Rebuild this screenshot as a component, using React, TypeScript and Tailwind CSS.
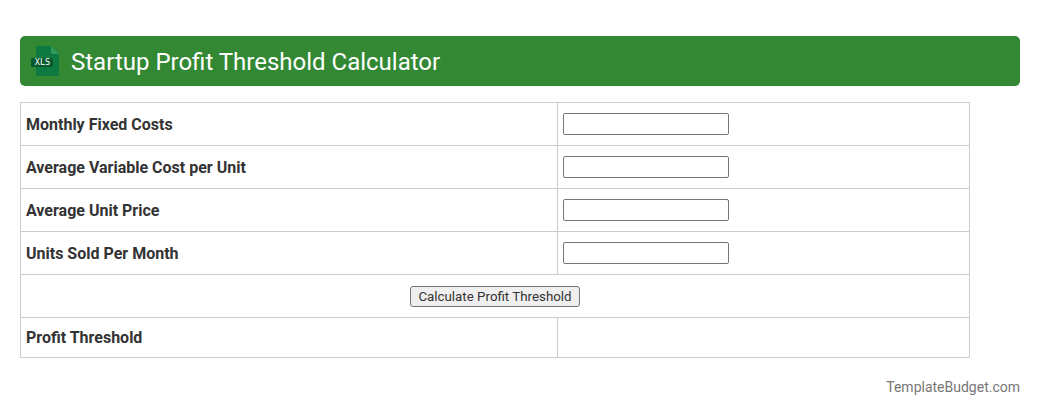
const filas = [
  "Monthly Fixed Costs",
  "Average Variable Cost per Unit",
  "Average Unit Price",
  "Units Sold Per Month",
];

function IconoXls() {
  return (
    <svg width="28" height="30" viewBox="0 0 28 30" className="shrink-0">
      <path d="M5 1a1 1 0 0 1 1-1h14l8 8v21a1 1 0 0 1-1 1H6a1 1 0 0 1-1-1z" fill="#0e7a42" />
      <path d="M20 0l8 8h-7a1 1 0 0 1-1-1z" fill="#2f9a62" />
      <rect x="0" y="12" width="22" height="9" fill="#0a5a30" />
      <text x="11.500" y="19" textAnchor="middle" fill="#ffffff" fontSize="8.500" fontFamily="'DejaVu Sans Mono', monospace">XLS</text>
    </svg>
  );
}

export default function App() {
  return (
    <div className="w-[1040px] h-[415px] bg-white font-['Roboto',sans-serif] text-[#333333] pt-9 px-5 overflow-hidden">
      {/* Cabecera */}
      <div className="h-[50px] bg-[#338833] rounded-[5px] flex items-center pl-[11px]">
        <IconoXls />
        <h1 className="ml-3 pt-0.5 text-2xl font-normal text-white">Startup Profit Threshold Calculator</h1>
      </div>

      <table className="mt-4 w-[950px] border-collapse table-fixed">
        <tbody>
          {filas.map((f) => (
            <tr key={f} className="h-[43px]">
              <td className="w-[537px] border border-[#cccccc] px-[5px] pt-0.5 text-base font-bold">{f}</td>
              <td className="border border-[#cccccc] px-[5px]">
                <input type="text" className="block w-[166px] h-[22px] bg-white border border-[#767676] rounded-[2px]" />
              </td>
            </tr>
          ))}
          <tr className="h-[43px]">
            <td colSpan={2} className="border border-[#cccccc] px-[5px] text-center">
              <button className="h-[21px] px-[7px] bg-[#efefef] border border-[#767676] rounded-[3px] text-[13.333px] leading-none">
                Calculate Profit Threshold
              </button>
            </td>
          </tr>
          <tr className="h-10">
            <td className="border border-[#cccccc] px-[5px] text-base font-bold">Profit Threshold</td>
            <td className="border border-[#cccccc] px-[5px]"></td>
          </tr>
        </tbody>
      </table>

      <div className="mt-[19px] text-right text-sm text-[#777777]">TemplateBudget.com</div>
    </div>
  );
}
